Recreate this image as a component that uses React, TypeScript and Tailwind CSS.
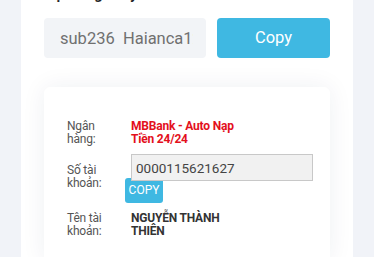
import { useState } from 'react';

export default function App() {
  const [account] = useState('0000115621627');

  return (
    <div className="h-[257px] overflow-hidden bg-[#f1f3f8] px-[21px] font-['Roboto',sans-serif]">
      <div className="bg-white h-full px-[23px]">
        {/* heading, mostly scrolled off */}
        <div className="h-[8px] overflow-hidden relative">
          <p className="absolute top-[-13px] left-0 text-[14.5px] leading-[16px] font-bold text-[#222] whitespace-nowrap">
            Nội dung chuyển khoản
          </p>
        </div>

        <div className="flex gap-[11px] mt-[10px]">
          <input
            readOnly
            value="sub236  Haianca123"
            className="w-[162px] h-[40px] rounded-[4px] bg-[#f2f4f7] pl-[16px] pr-[13px] text-[16.5px] text-[#707070] outline-none"
          />
          <button className="w-[113px] h-[40px] rounded-[4px] bg-[#3fb8e2] text-white text-[16.5px]">
            Copy
          </button>
        </div>

        <div className="mt-[29px] rounded-[6px] bg-white shadow-[0_0_24px_rgba(30,40,80,0.07)] pl-[23px] pr-[17px] pt-[33px] pb-[24px] text-[12px] leading-[13px] tracking-[-0.2px]">
          <div className="flex">
            <div className="w-[64px] text-[#555]">Ngân<br />hàng:</div>
            <div className="font-bold text-[#e3101c]">MBBank - Auto Nạp<br />Tiền 24/24</div>
          </div>

          <div className="flex mt-[8px]">
            <div className="w-[64px] text-[#555] pt-[10px]">Số tài<br />khoản:</div>
            <div className="flex-1">
              <input
                readOnly
                value={account}
                className="w-full h-[27px] border border-[#c8c8c8] bg-[#f1f1f1] px-[4px] text-[13.5px] tracking-normal text-[#444] outline-none"
              />
              <button className="-ml-[6px] -mt-[3px] block h-[25px] w-[38px] rounded-[3px] bg-[#3fb8e2] text-white text-[12px] tracking-normal">
                COPY
              </button>
            </div>
          </div>

          <div className="flex mt-[9px]">
            <div className="w-[64px] text-[#555]">Tên tài<br />khoản:</div>
            <div className="font-bold text-[#333]">NGUYỄN THÀNH<br />THIÊN</div>
          </div>
        </div>
      </div>
    </div>
  );
}
